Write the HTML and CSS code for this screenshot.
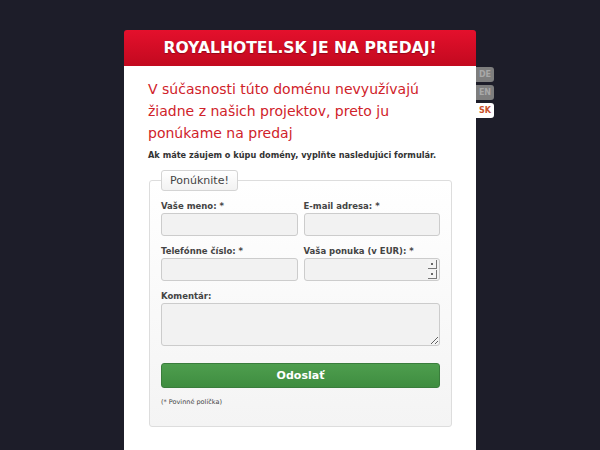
FILE: index.html
```html
<!DOCTYPE html>
<html lang="sk">
<head>
    <meta charset="UTF-8">
    <title>royalhotel.sk je na predaj!</title>
    <link rel="stylesheet" href="styles.css">
</head>
<body>
    <div class="wrap">
        <h1 class="title">ROYALHOTEL.SK JE NA PREDAJ!</h1>
        <div class="panel">
            <ul class="langs">
                <li><a href="#">DE</a></li>
                <li><a href="#">EN</a></li>
                <li class="active"><a href="#">SK</a></li>
            </ul>
            <p class="lead">V súčasnosti túto doménu nevyužívajú žiadne z našich projektov, preto ju ponúkame na predaj</p>
            <p class="intro">Ak máte záujem o kúpu domény, vyplňte nasledujúci formulár.</p>
            <form class="offer">
                <fieldset>
                    <legend>Ponúknite!</legend>
                    <div class="row">
                        <div class="field">
                            <label>Vaše meno: *</label>
                            <input type="text">
                        </div>
                        <div class="field">
                            <label>E-mail adresa: *</label>
                            <input type="text">
                        </div>
                    </div>
                    <div class="row">
                        <div class="field">
                            <label>Telefónne číslo: *</label>
                            <input type="text">
                        </div>
                        <div class="field">
                            <label>Vaša ponuka (v EUR): *</label>
                            <div class="number">
                                <input type="text">
                                <span class="spin"><i></i><i></i></span>
                            </div>
                        </div>
                    </div>
                    <div class="field">
                        <label>Komentár:</label>
                        <textarea></textarea>
                    </div>
                    <button type="button">Odoslať</button>
                    <p class="note">(* Povinné políčka)</p>
                </fieldset>
            </form>
        </div>
    </div>
</body>
</html>
```

FILE: styles.css
```css
body {
    margin: 0;
    background-color: #1d1d29;
    font-family: 'DejaVu Sans', Verdana, sans-serif;
}

.wrap {
    width: 352px;
    margin: 30px auto 0;
}

.title {
    margin: 0;
    height: 36px;
    line-height: 36px;
    text-align: center;
    font-size: 15.6px;
    color: #fff;
    background: linear-gradient(#e4102c, #c2091f);
    border-radius: 3px 3px 0 0;
    text-shadow: 0 1px 1px rgba(0, 0, 0, 0.3);
}

.panel {
    position: relative;
    background-color: #fff;
    padding: 12px 24px 24px;
    min-height: 370px;
}

.langs {
    position: absolute;
    left: 100%;
    top: 1px;
    margin: 0;
    padding: 0;
    list-style: none;
}

.langs li {
    margin-bottom: 3px;
}

.langs a {
    display: block;
    width: 18px;
    height: 15px;
    line-height: 15px;
    text-align: center;
    font-size: 8px;
    font-weight: bold;
    color: #a8a8a8;
    background-color: #7e7e7e;
    border-radius: 0 3px 3px 0;
    text-decoration: none;
}

.langs .active a {
    background-color: #fff;
    color: #c8502a;
}

.lead {
    margin: 0;
    font-size: 14px;
    line-height: 22px;
    color: #d0222a;
}

.intro {
    margin: 6px 0 10px;
    font-size: 8.2px;
    font-weight: bold;
    color: #333;
}

fieldset {
    margin: 0 0 0 1px;
    padding: 10px 11px 20px;
    border: 1px solid #ddd;
    border-radius: 3px;
    background: linear-gradient(#fff, #f4f4f4);
}

legend {
    font-size: 11px;
    color: #444;
    padding: 3px 8px;
    border: 1px solid #d4d4d4;
    border-radius: 3px;
    background: linear-gradient(#fff, #f2f2f2);
}

.row {
    display: flex;
    gap: 6px;
}

.row .field {
    flex: 1;
}

.field {
    margin-bottom: 10px;
}

label {
    display: block;
    font-size: 8.5px;
    font-weight: bold;
    color: #444;
    margin-bottom: 2px;
}

input,
textarea {
    box-sizing: border-box;
    width: 100%;
    height: 23px;
    border: 1px solid #ccc;
    border-radius: 3px;
    background-color: #f2f2f2;
    font-family: inherit;
}

textarea {
    display: block;
    height: 43px;
    resize: vertical;
}

.number {
    position: relative;
}

.spin {
    position: absolute;
    right: 3px;
    top: 2px;
    width: 9px;
    height: 19px;
    display: flex;
    flex-direction: column;
    gap: 1px;
}

.spin i {
    flex: 1;
    background: radial-gradient(circle, #666 1px, transparent 1.5px), #f4f4f4;
    border-right: 1px solid #777;
    border-bottom: 1px solid #777;
}

button {
    display: block;
    width: 100%;
    height: 25px;
    margin-top: 17px;
    border: 1px solid #3a7d3c;
    border-radius: 3px;
    background: linear-gradient(#4e9e4e, #3f8d40);
    color: #fff;
    font-family: inherit;
    font-size: 11px;
    font-weight: bold;
}

.note {
    margin: 10px 0 0;
    font-size: 6.5px;
    color: #444;
}
```
